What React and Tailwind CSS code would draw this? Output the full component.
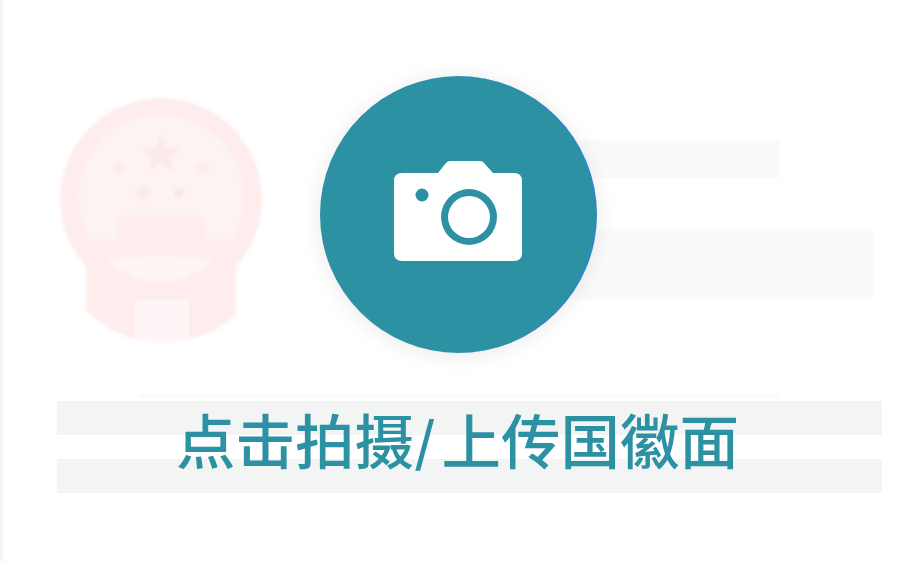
function Emblem() {
  return (
    <svg width="208" height="250" viewBox="0 0 208 250" className="shrink-0 blur-[1.5px]">
      <circle cx="104" cy="102" r="101" fill="#ffeded" />
      <path d="M29 150 L29 213 Q60 245 104 245 Q150 245 179 218 L179 150 Z" fill="#ffeded" />
      <path d="M34 143 A82 82 0 1 1 174 143 Z" fill="#fdf3f3" />
      <path d="M60 143 L60 125 Q62 118 70 118 L140 118 Q148 118 150 143 Z" fill="#ffeded" />
      <path d="M51 163 Q104 155 156 163 Q130 185 104 185 Q76 185 51 163 Z" fill="#fef5f5" />
      <path d="M78 203 H132 V243 Q104 247 78 243 Z" fill="#fef6f6" />
      <polygon points="104,38 109,50 124,51 113,60 117,74 104,66 91,74 95,60 84,51 99,50" fill="#fce9e9" />
      <circle cx="62" cy="71" r="6" fill="#fdeaea" />
      <circle cx="146" cy="71" r="6" fill="#fdeaea" />
      <circle cx="86" cy="96" r="7" fill="#fdeaea" />
      <circle cx="122" cy="96" r="5" fill="#fce6e6" />
    </svg>
  )
}

export default function App() {
  return (
    <div className="relative h-[576px] w-[912px] overflow-hidden bg-white font-['Noto_Sans_CJK_SC',sans-serif]">
      <div className="flex h-[561px] flex-col border-b border-[#fbfbfb] border-l-[3px] border-l-[#f5f6f6] pl-[54px] pr-[30px] pt-[97px]">
        <div className="flex h-[304px] items-start">
          <Emblem />
          <div className="ml-[85px] flex flex-1 flex-col pt-[43px]">
            <div className="h-[38px] w-[430px] bg-[#fafafa]" />
            <div className="mt-[51px] h-[70px] w-[523px] bg-[#fafafa]" />
          </div>
        </div>
        <div className="h-[34px] w-[825px] bg-[#f3f5f5]" />
        <div className="mt-[24px] h-[34px] w-[825px] bg-[#f3f5f5]" />
      </div>

      <div className="absolute inset-x-0 top-[76px] flex flex-col items-center pl-[5px]">
        <div className="flex h-[277px] w-[277px] items-center justify-center rounded-full border-r-2 border-r-[#2f86c9] bg-[#2d91a4] shadow-[0_2px_22px_rgba(0,0,0,0.09)]">
          <svg width="128" height="100" viewBox="0 0 128 100" className="mb-[8px]">
            <path
              fill="#fff"
              fillRule="evenodd"
              d="M8 12 H44 L52 2 Q54 0 56 0 H86 Q89 0 90 2 L99 12 H120 Q128 12 128 20 V92 Q128 100 120 100 H8 Q0 100 0 92 V20 Q0 12 8 12 Z M28 27.5 A6.5 6.5 0 1 0 28 40.5 A6.5 6.5 0 1 0 28 27.5 Z M75 28 A28 28 0 1 0 75 84 A28 28 0 1 0 75 28 Z M75 35 A21 21 0 1 1 75 77 A21 21 0 1 1 75 35 Z"
            />
          </svg>
        </div>
        <div className="mt-[41px] h-[3px] w-[640px] bg-[#fbfaf6]" />
        <div className="ml-[-2px] mt-[3px] whitespace-nowrap text-[59.5px] font-medium leading-[76px] text-[#2d91a4]">
          点击拍摄<span className="font-['Inter'] font-normal tracking-[6px]">/</span>上传国徽面
        </div>
      </div>
    </div>
  )
}
